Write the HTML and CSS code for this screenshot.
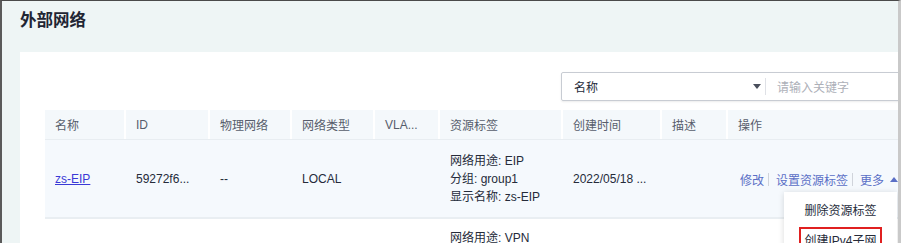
FILE: index.html
```html
<!DOCTYPE html>
<html lang="zh-CN">
    <head>
        <meta charset="UTF-8">
        <title>外部网络</title>
        <link rel="stylesheet" href="styles.css">
    </head>
    <body>
        <div class="screen">
            <h1 class="page-title">外部网络</h1>
            <div class="card">
                <div class="toolbar">
                    <div class="search">
                        <div class="search-field">
                            <span>名称</span>
                            <span class="caret"></span>
                        </div>
                        <span class="search-sep"></span>
                        <span class="placeholder">请输入关键字</span>
                    </div>
                </div>
                <div class="table">
                    <div class="row head">
                        <div class="cell">名称</div>
                        <div class="cell">ID</div>
                        <div class="cell">物理网络</div>
                        <div class="cell">网络类型</div>
                        <div class="cell">VLA...</div>
                        <div class="cell">资源标签</div>
                        <div class="cell">创建时间</div>
                        <div class="cell">描述</div>
                        <div class="cell">操作</div>
                    </div>
                    <div class="row body shaded">
                        <div class="cell"><a class="name-link" href="#">zs-EIP</a></div>
                        <div class="cell">59272f6...</div>
                        <div class="cell">--</div>
                        <div class="cell">LOCAL</div>
                        <div class="cell"></div>
                        <div class="cell tags">
                            <span>网络用途: EIP</span>
                            <span>分组: group1</span>
                            <span>显示名称: zs-EIP</span>
                        </div>
                        <div class="cell">2022/05/18 ...</div>
                        <div class="cell"></div>
                        <div class="cell actions">
                            <a href="#">修改</a><span class="sep"></span><a href="#">设置资源标签</a><span class="sep"></span><a href="#">更多</a><span class="up"></span>
                        </div>
                    </div>
                    <div class="row body top">
                        <div class="cell"></div>
                        <div class="cell"></div>
                        <div class="cell"></div>
                        <div class="cell"></div>
                        <div class="cell"></div>
                        <div class="cell tags">
                            <span>网络用途: VPN</span>
                        </div>
                        <div class="cell"></div>
                        <div class="cell"></div>
                        <div class="cell"></div>
                    </div>
                </div>
                <ul class="menu">
                    <li>删除资源标签</li>
                    <li><span class="marked">创建IPv4子网</span></li>
                </ul>
            </div>
        </div>
    </body>
</html>
```

FILE: styles.css
```css
body {
    margin: 0;
    font-family: "Liberation Sans", "Noto Sans CJK SC", sans-serif;
    font-size: 12px;
    color: #252b3a;
    overflow: hidden;
}
.screen {
    height: 243px;
    box-sizing: border-box;
    border-top: 1px solid #4a4a4a;
    border-left: 2px solid #5a5a5a;
    border-right: 3px solid #c9c9c9;
    background-color: #eef5f5;
    overflow: hidden;
}
.page-title {
    margin: 0;
    padding: 9px 0 0 18px;
    height: 42px;
    font-size: 16.5px;
    font-weight: bold;
    line-height: 20px;
    color: #1f2533;
}
.card {
    position: relative;
    margin-left: 18px;
    height: 300px;
    padding: 20px 0 0 25px;
    background-color: #fff;
    overflow: hidden;
}
.toolbar {
    display: flex;
    justify-content: flex-end;
    margin-right: -12px;
    margin-bottom: 9px;
}
.search {
    display: flex;
    align-items: center;
    width: 347px;
    height: 27px;
    border: 1px solid #c8ccd3;
    border-radius: 2px;
    box-shadow: 0 1px 2px rgba(0, 0, 0, 0.08);
}
.search-field {
    display: flex;
    align-items: center;
    justify-content: space-between;
    box-sizing: border-box;
    width: 203px;
    padding: 0 4px 0 12px;
    color: #252b3a;
}
.caret {
    width: 0;
    height: 0;
    border-left: 4px solid transparent;
    border-right: 4px solid transparent;
    border-top: 5px solid #4a4f5c;
}
.search-sep {
    width: 1px;
    height: 17px;
    background-color: #dfe1e6;
}
.placeholder {
    margin-left: 11px;
    color: #adb0b8;
}
.row {
    display: grid;
    grid-template-columns: 81px 84px 82px 83px 65px 123px 99px 66px 1fr;
}
.head {
    height: 29px;
    border-bottom: 1px solid #e8edf1;
}
.head .cell {
    display: flex;
    align-items: center;
    padding-left: 10px;
    background-color: #f4f8fb;
    border-right: 2px solid #fff;
    color: #575d6c;
}
.head .cell:last-child {
    border-right: none;
}
.body {
    border-bottom: 2px solid #e9eef2;
}
.body .cell {
    display: flex;
    align-items: center;
    padding: 12px 0 11px 10px;
    min-height: 54px;
}
.shaded {
    background-color: #f5f9fd;
}
.tags {
    flex-direction: column;
    justify-content: center;
    align-items: flex-start !important;
    line-height: 18px;
}
.top .tags {
    justify-content: flex-start;
    padding-top: 10px !important;
}
.name-link {
    color: #3a3ad6;
    text-decoration: underline;
}
.actions {
    white-space: nowrap;
    padding-left: 12px !important;
}
.actions a {
    flex-shrink: 0;
    color: #5a6fc6;
    text-decoration: none;
}
.sep {
    flex-shrink: 0;
    width: 1px;
    height: 13px;
    margin: 0 7px 0 4px;
    background-color: #d0d4db;
}
.up {
    flex-shrink: 0;
    width: 0;
    height: 0;
    margin-left: 6px;
    border-left: 4px solid transparent;
    border-right: 4px solid transparent;
    border-bottom: 5px solid #5a6fc6;
}
.menu {
    position: absolute;
    left: 764px;
    top: 140px;
    width: 113px;
    margin: 0;
    padding: 4px 0 0;
    list-style: none;
    background-color: #fff;
    box-shadow: 0 1px 6px rgba(0, 0, 0, 0.15);
    text-align: center;
    color: #252b3a;
}
.menu li {
    height: 30px;
    line-height: 30px;
}
.marked {
    display: inline-block;
    line-height: 18px;
    padding: 3px 3px;
    border: 2px solid #e02020;
}
```
